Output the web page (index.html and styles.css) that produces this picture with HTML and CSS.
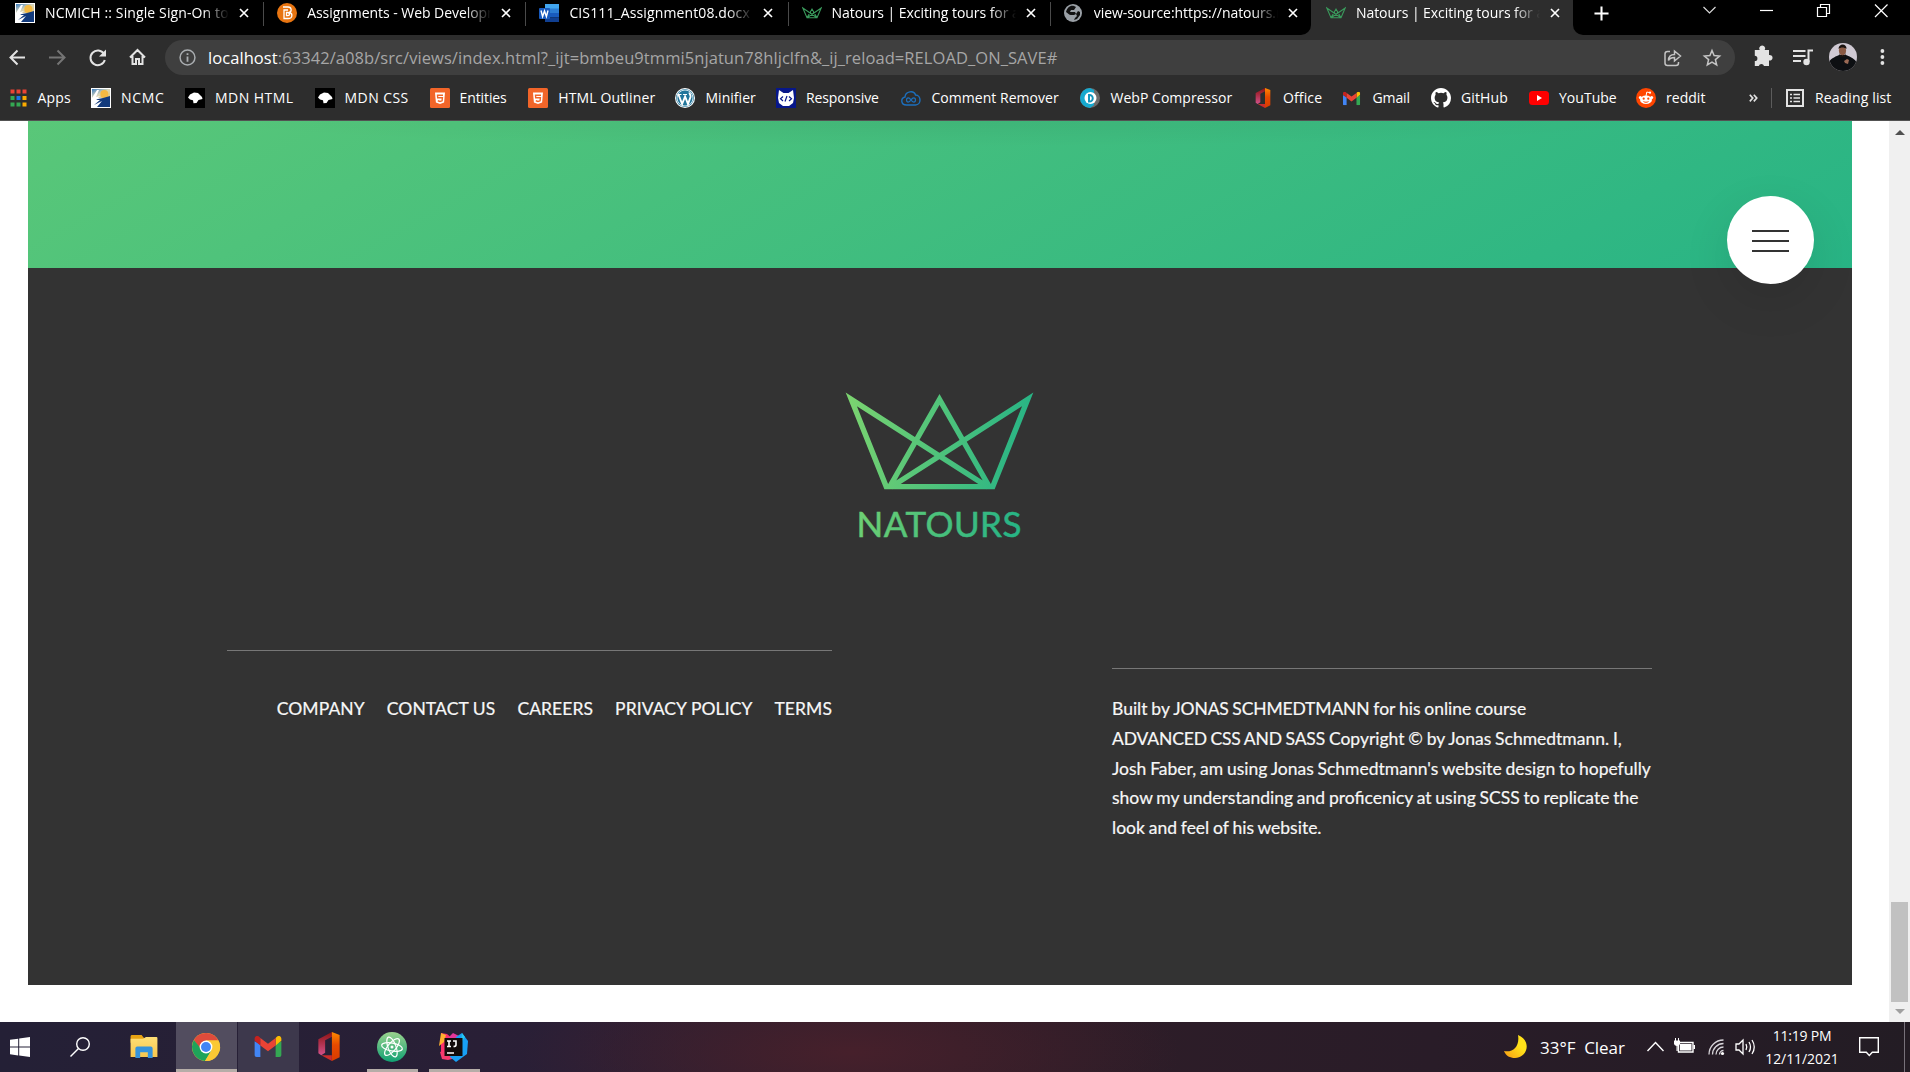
FILE: index.html
```html
<!DOCTYPE html>
<html lang="en">
<head>
<meta charset="utf-8">
<title>Natours | Exciting tours for adventurous people</title>
<link rel="stylesheet" href="styles.css">
</head>
<body>
<svg class="defs" aria-hidden="true">
  <defs>
    <linearGradient id="leaf" gradientUnits="userSpaceOnUse" x1="26" y1="0" x2="213" y2="30"><stop offset="0" stop-color="#7ed56f"/><stop offset="1" stop-color="#28b485"/></linearGradient>
    <linearGradient id="orange" x1="0" y1="0" x2="0" y2="1"><stop offset="0" stop-color="#ff8a00"/><stop offset=".45" stop-color="#e64a00"/><stop offset="1" stop-color="#d83b01"/></linearGradient>
    <linearGradient id="wine" x1="0" y1="0" x2="0" y2="1"><stop offset="0" stop-color="#8f1212"/><stop offset="1" stop-color="#d2518a"/></linearGradient>
    <linearGradient id="atom" x1="0" y1="0" x2="0" y2="1"><stop offset="0" stop-color="#9bd38e"/><stop offset="1" stop-color="#10a173"/></linearGradient>
    <linearGradient id="folder" x1="0" y1="0" x2="0" y2="1"><stop offset="0" stop-color="#ffdf75"/><stop offset="1" stop-color="#f7c64d"/></linearGradient>
    <linearGradient id="moon" x1="1" y1="0" x2="0" y2="1"><stop offset=".4" stop-color="#ffe11a"/><stop offset="1" stop-color="#f79a14"/></linearGradient>
    <linearGradient id="dusk" x1="0" y1="0" x2="1" y2="1"><stop offset="0" stop-color="#3a7cc0"/><stop offset=".5" stop-color="#d8d5b8"/><stop offset="1" stop-color="#e9c46a"/></linearGradient>
    <symbol id="ncmc" viewBox="0 0 20 20"><path fill="#fff" d="M0 0h20v20H0z"/><path fill="url(#dusk)" d="M1 1h18v9H1z"/><circle cx="13.3" cy="6" r="4" fill="#f4b942"/><path fill="#123a7c" d="M1 19V13l6-2 5-1 7-2v11z"/><path fill="#fff" d="m1 10 5-8 2 0-3 7 4-1-4 4 4 0-6 5 8-4-5 6H1z"/></symbol>
    <symbol id="crown" viewBox="0 0 20 20"><path fill="none" stroke="#3a9a5c" stroke-width="1.1" d="M.8 5 5 14.8h10L19.200 5 5 14.800 10 6l5 8.800Z"/></symbol>
    <symbol id="mdn" viewBox="0 0 20 20"><path d="M0 0h20v20H0z"/><path fill="#fff" d="M3 9.500 5 6.500l4-2 4 .5 4 4 .5 2-4 1-2 3-3 .3-.5-3-3-.8z"/></symbol>
    <symbol id="html5" viewBox="0 0 20 20"><rect width="20" height="20" rx="1.500" fill="#f26529"/><path fill="#fff" d="m5 4.500 10 0-.9 10L10 16l-4.100-1.500z"/><path fill="none" stroke="#f26529" stroke-width="1.400" d="M13 7.200H7.500l.2 2.600h4.700l-.3 3-2.100.6-2.200-.6"/></symbol>
    <symbol id="office" viewBox="0 0 24 30"><path fill="url(#wine)" d="M1 7.500 15 0v5L8 8.500v13L4 24l-3-2z"/><path fill="url(#orange)" d="m15 0 8 3v23l-8 4z"/><path fill="#ca2c2c" d="M4 24h11v6z"/></symbol>
    <symbol id="gmail" viewBox="0 0 28 22"><path fill="#4285f4" d="M0 5.500 6 9v13H2a2 2 0 0 1-2-2z"/><path fill="#34a853" d="m28 5.500-6 3.500v13h4a2 2 0 0 0 2-2z"/><path fill="#c5221f" d="M0 5V3c0-3 3-4 5-2l1 1v8z"/><path fill="#fbbc04" d="M28 5V3c0-3-3-4-5-2l-1 1v8z"/><path fill="#ea4335" d="M6 2v8l8 6 8-6V2l-8 6z"/></symbol>
    <symbol id="close" viewBox="0 0 12 12"><path stroke="#fff" stroke-width="2" d="m1.200 1.200 9.600 9.600M10.800 1.200 1.200 10.800"/></symbol>
  </defs>
</svg>

<header class="browser">
  <div class="tabs">
    <div class="tab"><svg class="fav"><use href="#ncmc"/></svg><span class="tab-title roomy">NCMICH :: Single Sign-On to all</span><svg class="x"><use href="#close"/></svg></div>
    <div class="tab"><svg class="fav" viewBox="0 0 20 20"><circle cx="10" cy="10" r="10" fill="#e87511"/><path fill="none" stroke="#fff" stroke-width="1.300" d="M6 4h5c4 0 4 5 1 5.500 4 .5 4 6-1 6H7V7h4M9.500 9.500H11c2 .5 2 3 0 3.200H9.500z"/></svg><span class="tab-title">Assignments - Web Development</span><svg class="x"><use href="#close"/></svg></div>
    <div class="tab"><svg class="fav" viewBox="0 0 20 20"><path fill="#41a5ee" d="M6 1h14v5H6z"/><path fill="#2b7cd3" d="M6 5.500h14V10H6z"/><path fill="#185abd" d="M6 10h14v4.500H6z"/><path fill="#103f91" d="M6 14.500h14V19H6z"/><rect y="5" width="11" height="11" rx="1" fill="#185abd"/><path fill="none" stroke="#fff" stroke-width="1.400" d="m2 7.500 1.600 6 1.900-5.500L7.400 13.500 9 7.500"/></svg><span class="tab-title roomy">CIS111_Assignment08.docx</span><svg class="x"><use href="#close"/></svg></div>
    <div class="tab"><svg class="fav"><use href="#crown"/></svg><span class="tab-title">Natours | Exciting tours for adv</span><svg class="x"><use href="#close"/></svg></div>
    <div class="tab"><svg class="fav globe" viewBox="0 0 20 20"><circle cx="9" cy="10" r="9" fill="#9aa0a6"/><path fill="#111" d="M2 9c1-4 4-7 8-6l2 1-2 3H7L6 9h5l1 2-2 1H7c-2 0-3-2-5-3zm12-1 2 1v3l-3 4-3 1 1-2 2-2-1-2z"/></svg><span class="tab-title">view-source:https://natours.n</span><svg class="x"><use href="#close"/></svg></div>
    <div class="tab active"><svg class="fav"><use href="#crown"/></svg><span class="tab-title">Natours | Exciting tours for adv</span><svg class="x"><use href="#close"/></svg></div>
    <div class="tab-rest">
      <svg class="plus" viewBox="0 0 16 16"><path stroke="#fff" stroke-width="2.200" d="M8 .5v15M.5 8h15"/></svg>
      <svg class="win" viewBox="0 0 190 20"><g fill="none" stroke="#fff" stroke-width="1.200"><path d="m3.500 7 6 6 6-6" opacity=".85"/><path d="M60 10.500h13"/><path d="M117.500 7.500h9v9h-9zM120.500 7.500v-3h9v9h-3"/><path d="m175 4.500 12.500 12.500m0-12.500L175 17"/></g></svg>
    </div>
  </div>

  <div class="toolbar">
    <svg class="nav" viewBox="0 0 165 42"><g fill="none" stroke="#e3e3e3" stroke-width="2"><path d="M25 22.500H11M17.500 15.500l-7 7 7 7"/><path stroke="#757575" d="M49 22.500h14.500M57.500 15.500l7 7-7 7"/><path d="M104 19a7.300 7.300 0 1 0 .8 6"/><path d="M130 22.500 137.500 15l7.500 7.500M132.500 21v8h3.500v-5h3v5h3.500v-8"/></g><path fill="#e3e3e3" d="M106 14.500v7h-7z"/></svg>
    <div class="omnibox">
      <svg class="info" viewBox="0 0 16 16"><circle cx="8" cy="8" r="7" fill="none" stroke="#a9adb0" stroke-width="1.400"/><path stroke="#a9adb0" stroke-width="1.700" d="M8 7v5M8 4v1.600"/></svg>
      <span class="url"><b>localhost</b>:63342/a08b/src/views/index.html?_ijt=bmbeu9tmmi5njatun78hljclfn&amp;_ij_reload=RELOAD_ON_SAVE#</span>
      <svg class="page-acts" viewBox="0 0 60 20"><g fill="none" stroke="#c4c4c4" stroke-width="1.500"><path d="M8 3.500H5.500a2.500 2.500 0 0 0-2.500 2.500v9a2.500 2.500 0 0 0 2.500 2.500h8.500a2.500 2.500 0 0 0 2.500-2.500v-1"/><path d="M6.500 12.500c0-4 2.500-6 6-6V3l6 5-6 5v-3.500c-3 0-5 1-6 3z"/><path d="m50 2.500 2.100 5.100 5.500.4-4.200 3.600 1.300 5.400-4.700-2.900-4.700 2.900 1.300-5.400L42.400 8l5.500-.4z"/></g></svg>
    </div>
    <svg class="exts" viewBox="0 0 175 42"><path transform="translate(-14 -1)" fill="#e3e3e3" d="M34.500 16h4.200a3 2.800 0 1 1 5 0h4.300v5a3 2.800 0 1 1 0 5.500V32h-5a2.700 2.700 0 0 0-5.200 0h-4v-5a2.600 2.600 0 0 0 0-5.200V16z"/><path stroke="#e3e3e3" stroke-width="2" fill="none" d="M58 16h12.500M58 21h12.500M58 26h8M73.500 27V15.500h4.500"/><circle cx="71.500" cy="27" r="3.200" fill="#e3e3e3"/>
      <clipPath id="face"><circle cx="108" cy="22" r="14"/></clipPath><g clip-path="url(#face)"><path fill="#cfc9d3" d="M90 5h40v40H90z"/><path fill="#0d0f12" d="M94 36v-9c2-4 8-6 10-7h7c5 2 9 4 11 8v12H94z"/><ellipse cx="107.500" cy="15.500" rx="3.600" ry="5" fill="#8a5a44"/><path fill="#19120f" d="M103.500 14c0-6 8.500-6 8 0-2-2-6-2-8 0zm.5 3c1 5 6 5 7 0l-1 5h-5z"/><path fill="#9b6a55" d="m109 26 3-2 2 1-1 4-3-1z"/></g>
      <g fill="#e3e3e3"><circle cx="147.400" cy="16" r="1.900"/><circle cx="147.400" cy="22" r="1.900"/><circle cx="147.400" cy="28" r="1.900"/></g></svg>
  </div>

  <nav class="bookmarks">
    <a><svg viewBox="0 0 20 20"><path fill="#ea4335" d="M2.500 1.500h4v4h-4zM8.500 1.500h4v4h-4zM14.500 1.500h4v4h-4z"/><path fill="#34a853" d="M2.500 8h4v4h-4zM2.500 14.500h4v4h-4zM8.500 14.500h4v4h-4z"/><path fill="#1a73e8" d="M8.500 8h4v4h-4z"/><path fill="#fbab00" d="M14.500 8h4v4h-4zM14.500 14.500h4v4h-4z"/></svg><span class="ls2">Apps</span></a>
    <a><svg><use href="#ncmc"/></svg><span class="ls5">NCMC</span></a>
    <a><svg><use href="#mdn"/></svg><span class="ls4">MDN HTML</span></a>
    <a><svg><use href="#mdn"/></svg><span class="ls4">MDN CSS</span></a>
    <a><svg><use href="#html5"/></svg><span class="tight">Entities</span></a>
    <a><svg><use href="#html5"/></svg><span class="ls1">HTML Outliner</span></a>
    <a><svg viewBox="0 0 20 20"><circle cx="10" cy="10" r="10" fill="#fff"/><circle cx="10" cy="10" r="9" fill="#21759b"/><circle cx="10" cy="10" r="8" fill="none" stroke="#fff" stroke-width=".8"/><path fill="none" stroke="#fff" stroke-width="1.900" d="m3.500 6.500 3.600 9.500 3-7.500 2.900 7.500 2.500-7c.5-2-1-2.500-1-4.500"/><path stroke="#fff" d="M2.500 6.500h4M8 6.500h4"/></svg><span>Minifier</span></a>
    <a><svg viewBox="0 0 20 20"><path fill="#07178a" d="M0 0h20v20H0z"/><path fill="#fff" d="m3 2 4.500 3h5L17 2l1 8-1 5-4 3H7l-4-3-1-5z"/><path fill="none" stroke="#07178a" stroke-width="1.200" d="m7 8.500-2.500 2.300L7 13m6-4.500 2.500 2.300L13 13m-2-5-2 5.500"/></svg><span class="tight">Responsive</span></a>
    <a><svg viewBox="0 0 20 20"><path fill="none" stroke="#1c6fbd" stroke-width="1.400" d="M5.500 17C-.5 17-.5 10 4 9c.5-6 9-7 10.500-2 6 0 6 10 0 10z"/><path fill="none" stroke="#1c6fbd" stroke-width="1.300" d="M10 12c-2-3-4.500-2.500-4.500 0s2.500 3 4.500 0 4.500-2.500 4.500 0-2.500 3-4.500 0z"/></svg><span>Comment Remover</span></a>
    <a><svg viewBox="0 0 20 20"><circle cx="10" cy="10" r="10" fill="#6b6b6b"/><path fill="#16a9cf" d="M10 0a10 10 0 0 0 0 20l4-3V2z"/><circle cx="10.500" cy="10" r="6" fill="#fff"/><path fill="none" stroke="#1496bd" stroke-width="2" d="M9 7v6.500c5 .5 5-7 0-6.500z"/></svg><span>WebP Compressor</span></a>
    <a><svg><use href="#office"/></svg><span class="ls1">Office</span></a>
    <a><svg viewBox="-1 0 22 20"><use href="#gmail" y="3" width="19" height="15"/></svg><span class="tight">Gmail</span></a>
    <a><svg viewBox="0 0 16 16"><path fill="#fff" d="M8 0C3.580 0 0 3.580 0 8c0 3.540 2.290 6.530 5.470 7.590.4.070.55-.17.55-.38 0-.19-.01-.82-.01-1.490-2.010.37-2.530-.49-2.690-.94-.09-.23-.48-.94-.82-1.130-.28-.15-.68-.52-.01-.53.63-.01 1.080.58 1.230.82.72 1.210 1.870.87 2.330.66.070-.52.28-.87.51-1.070-1.780-.2-3.640-.89-3.640-3.950 0-.87.31-1.590.82-2.150-.08-.2-.36-1.020.08-2.120 0 0 .67-.21 2.200.82a7.400 7.400 0 0 1 4 0c1.530-1.040 2.200-.82 2.200-.82.44 1.100.16 1.920.08 2.120.51.56.82 1.270.82 2.150 0 3.070-1.870 3.750-3.650 3.950.29.25.54.73.54 1.480 0 1.070-.01 1.930-.01 2.200 0 .21.15.46.55.38A8 8 0 0 0 16 8c0-4.420-3.580-8-8-8z"/></svg><span class="ls1">GitHub</span></a>
    <a><svg viewBox="0 0 20 20"><rect y="3" width="20" height="14" rx="3.500" fill="red"/><path fill="#fff" d="m8 7 5 3-5 3z"/></svg><span>YouTube</span></a>
    <a><svg viewBox="0 0 20 20"><circle cx="10" cy="10" r="10" fill="#ff4500"/><ellipse cx="10" cy="11.700" rx="6" ry="4.300" fill="#fff"/><circle cx="4.300" cy="9.500" r="1.500" fill="#fff"/><circle cx="15.700" cy="9.500" r="1.500" fill="#fff"/><path fill="none" stroke="#fff" d="m10 8 .8-4 3 .7"/><circle cx="14" cy="4.700" r="1.100" fill="#fff"/><circle cx="7.700" cy="10.700" r="1.100" fill="#ff4500"/><circle cx="12.300" cy="10.700" r="1.100" fill="#ff4500"/><path fill="none" stroke="#ff4500" d="M7.500 13.500c1.500 1 3.500 1 5 0"/></svg><span>reddit</span></a>
    <svg class="more" viewBox="0 0 9 9"><path fill="none" stroke="#e3e3e3" stroke-width="1.600" d="m.8.8 3 3.300-3 3.300m4-6.600 3 3.300-3 3.300"/></svg>
    <a class="reading"><svg viewBox="0 0 20 20"><path fill="none" stroke="#e3e3e3" stroke-width="2" d="M2 2h16v16H2z"/><path stroke="#e3e3e3" stroke-width="1.700" d="M5 6.500h2M5 10h2M5 13.500h2M8.500 6.500H15M8.500 10H15M8.500 13.500H15"/></svg><span class="ls1">Reading list</span></a>
  </nav>
</header>

<main class="viewport">
  <div class="page">
    <section class="booking"></section>
    <footer class="footer">
      <svg class="logo" viewBox="0 0 240 190"><g fill="none" stroke="url(#leaf)" stroke-width="5.400" stroke-miterlimit="10"><path d="M119.500 86 31.300 29.400 66.200 116.600h106.600L207.700 29.400 119.500 86"/><path d="m119.500 86 48.500 31M119.500 86 71 117M69.500 117l50-87.500 50 87.500"/></g><text class="brand" x="36.500" y="167" textLength="165" fill="url(#leaf)" stroke="url(#leaf)" stroke-width=".5">NATOURS</text></svg>
      <div class="columns">
        <ul class="links"><li>Company</li><li>Contact us</li><li>Careers</li><li>Privacy policy</li><li>Terms</li></ul>
        <p class="copy">Built by <span class="up">Jonas Schmedtmann</span> for his online course <span class="up course">Advanced CSS and Sass</span> Copyright &copy; by Jonas Schmedtmann. I, Josh Faber, am using Jonas Schmedtmann's website design to hopefully show my understanding and proficenicy at using SCSS to replicate the look and feel of his website.</p>
      </div>
    </footer>
  </div>
  <div class="scrollbar"><i class="up-arrow"></i><i class="thumb"></i><i class="down-arrow"></i></div>
  <button class="menu" aria-label="Menu"><i></i><i></i><i></i></button>
</main>

<div class="taskbar">
  <div class="task start"><svg viewBox="0 0 20 20"><path fill="#fff" d="m0 2.800 8.200-1.100v7.900H0zM9.200 1.500 20 0v9.600H9.200zM0 10.500h8.200v7.900L0 17.300zM9.200 10.500H20V20L9.200 18.500z"/></svg></div>
  <div class="task search"><svg viewBox="0 0 20 20"><g fill="none" stroke="#fff" stroke-width="1.400"><circle cx="13" cy="7" r="6.300"/><path d="M8.500 11.500.5 19.500"/></g></svg></div>
  <div class="task files"><svg viewBox="0 0 28 24"><path fill="#e8a313" d="M0 1.500Q0 0 1.500 0h10L14 3v5H0z"/><path fill="url(#folder)" d="M0 4h13l3-2h11q1 0 1 1v20H0z"/><path fill="#3593dc" d="M5 24V14q0-2 2-2h14q2 0 2 2v10h-5v-6h-8v6z"/></svg></div>
  <div class="task chrome run"><svg viewBox="0 0 28 28"><circle cx="14" cy="14" r="14" fill="#fbc934"/><path fill="#de4b3c" d="M14 14V7.500h12.400A14 14 0 0 0 1.900 7l6.500 10z"/><path fill="#1ea45a" d="M1.900 7A14 14 0 0 0 13 28l6-10-9-1z"/><path fill="#fbc934" d="M13 28A14 14 0 0 0 26.400 7.500H14l5.600 10z"/><circle cx="14" cy="14" r="6.400" fill="#fff"/><circle cx="14" cy="14" r="5" fill="#4285f4"/></svg></div>
  <div class="task mail"><svg><use href="#gmail"/></svg></div>
  <div class="task off"><svg><use href="#office"/></svg></div>
  <div class="task atom run"><svg viewBox="0 0 30 30"><circle cx="15" cy="15" r="15" fill="url(#atom)"/><g fill="none" stroke="#fff" stroke-width="1.200"><ellipse cx="15" cy="15" rx="4" ry="10.500" transform="rotate(-20 15 15)"/><ellipse cx="15" cy="15" rx="4" ry="10.500" transform="rotate(40 15 15)"/><ellipse cx="15" cy="15" rx="4" ry="10.500" transform="rotate(100 15 15)"/></g><circle cx="15" cy="15" r="1.500" fill="#fff"/></svg></div>
  <div class="task idea run"><svg viewBox="0 0 30 30"><path fill="#fc2f6d" d="m2 1 6 1 7 6-6 14-7-2z"/><path fill="#ffb02e" d="M2 1 7 3 5 10 0 14z"/><path fill="#e5379a" d="m14 1 6 3-5 8-6-6z"/><path fill="#f53b6f" d="m1 20 8-2 8 8-8 2-6-1z"/><path fill="#18a0f5" d="m17 5 6-4 6 8-1 13-11 8-6-5z"/><path fill="#23c7f0" d="m23 1 3 4-4 6z"/><path fill="#120c0c" d="M5.500 6h18v18h-18z"/><path fill="none" stroke="#fff" stroke-width="1.600" d="M8 9h4M10 9v5.500M8 14.500h4M14 9h3v4q0 1.500-2.500 1.500M8 21h7"/></svg></div>
  <div class="tray">
    <svg class="moon" viewBox="0 0 23 23"><path fill="url(#moon)" d="M14 0C27 5 25 22 11 23 6 23 2 21 0 16c9 2 16-5 14-16z"/></svg>
    <span class="weather">33°F&nbsp; Clear</span>
    <svg class="status" viewBox="0 0 116 24"><g fill="none" stroke="#fff" stroke-width="1.400"><path d="m4.500 17 8-8.500 8 8.500"/><path d="M35.500 8.500H50v9.500H35.500z"/></g><path fill="#fff" d="M37 10h11.500v6.500H37zM50.500 11h1.500v4h-1.500zM31 6.500h6v3.500q-1 2-2.300 2v5h-1.200v-5q-2-.3-2.500-2zM32 4h1v3h-1zM35 4h1v3h-1z"/><g fill="none" stroke="#d8d5da" stroke-width="1.300"><path d="M66 20.500A14.500 14.500 0 0 1 80.500 6M69.500 20.500a11 11 0 0 1 11-11M73 20.500a7.500 7.500 0 0 1 7.500-7.500M76.500 20.500a4 4 0 0 1 4-4"/></g><circle cx="79.500" cy="19.500" r="1.600" fill="#fff"/><g fill="none" stroke="#fff" stroke-width="1.300"><path d="M93 10h3l4-4v14l-4-4h-3zM103 10q1.500 3 0 6M106 8q3 5 0 10M109 6q4.500 7 0 14"/></g></svg>
    <div class="clock"><span class="time">11:19 PM</span><span>12/11/2021</span></div>
    <svg class="note" viewBox="0 0 20 20"><path fill="none" stroke="#fff" stroke-width="1.400" d="M.7.7h18.600v14.600h-6L10.300 18.500 7.300 15.300H.7z"/></svg>
  </div>
</div>
</body>
</html>
```
FILE: styles.css
```css
* { box-sizing: border-box; margin: 0; padding: 0; }
body { width: 1910px; height: 1072px; overflow: hidden; background: #fff; display: flex; flex-direction: column; font-family: "Open Sans", "Noto Sans", sans-serif; }
svg { display: block; flex: none; overflow: visible; }
.defs { position: absolute; width: 0; height: 0; }

/* Browser chrome */
.browser { height: 121px; flex: none; background: #2d2d2d; border-bottom: 1px solid #525252; color: #fff; }
.tabs { height: 35px; display: flex; background: #2d2d2d; }
.tab { width: 262.200px; height: 35px; flex: none; background: #000; display: flex; align-items: flex-start; padding: 3px 0 0 15px; }
.tab:not(.active) { background: linear-gradient(#4a4a4a, #4a4a4a) 1px 2px / 1px 24px no-repeat #000; }
.tab:first-child { background: #000; }
.tab:nth-child(5) { border-bottom-right-radius: 10px; }
.tab.active { background: #2d2d2d; }
.fav { width: 20px; height: 20px; margin-right: 10px; }
.tab-title { width: 185px; height: 24px; overflow: hidden; white-space: nowrap; font-size: 14px; line-height: 20px; letter-spacing: -.05px; -webkit-mask: linear-gradient(90deg, #000 158px, transparent 184px); mask: linear-gradient(90deg, #000 158px, transparent 184px); }
.tab-title.roomy { letter-spacing: .12px; }
.x { width: 10px; height: 10px; margin: 5px 0 0 9px; }
.tab-rest { flex: 1; background: #000; border-bottom-left-radius: 10px; display: flex; padding: 3px 20px 0 21px; justify-content: space-between; }
.plus { width: 15px; height: 15px; margin-top: 3px; }
.win { width: 190px; height: 20px; margin-top: -3px; }

.toolbar { height: 41px; display: flex; }
.nav { width: 165px; height: 42px; }
.omnibox { width: 1570px; height: 35px; margin-top: 5px; border-radius: 18px; background: #3f3f3f; display: flex; align-items: center; padding: 0 13px 0 14px; }
.info { width: 17px; height: 17px; }
.url { margin-left: 12px; font-size: 16.500px; letter-spacing: .07px; line-height: 35px; color: #a6a6a6; white-space: nowrap; }
.url b { font-weight: 400; color: #fff; }
.page-acts { width: 60px; height: 20px; margin-left: auto; }
.exts { width: 175px; height: 42px; }

.bookmarks { height: 44px; padding-left: 7.500px; display: grid; grid-template-columns: 83.500px 94px 129.500px 115px 98.800px 147.200px 100.500px 125.500px 179px 172.500px 89.500px 88.500px 98px 107px 113px 22px 1fr; align-items: center; }
.bookmarks a { display: flex; align-items: center; gap: 10px; font-size: 14px; line-height: 20px; letter-spacing: .03px; white-space: nowrap; }
.bookmarks a svg { width: 20px; height: 20px; }
.bookmarks .tight { letter-spacing: -.1px; }
.bookmarks .ls1 { letter-spacing: .13px; }
.bookmarks .ls2 { letter-spacing: .2px; }
.bookmarks .ls4 { letter-spacing: .45px; }
.bookmarks .ls5 { letter-spacing: .65px; }
.bookmarks .more { width: 9px; height: 9px; }
.reading { border-left: 1px solid #5c5c5c; padding-left: 13px; }

/* Page */
.viewport { height: 901px; flex: none; display: flex; justify-content: space-between; position: relative; }
.page { width: 1852px; padding-left: 28px; }
.booking { height: 147px; background: radial-gradient(ellipse 740px 26px at 50% 0, rgba(0,0,0,.05), transparent) no-repeat, linear-gradient(to right bottom, #7ed56f, #28b485) left bottom / 1824px 1000px no-repeat; }
.footer { height: 717px; background: #333; padding-top: 102px; color: #f7f7f7; font: 17.500px/29.750px Lato, sans-serif; -webkit-text-stroke: .2px #f7f7f7; }
.logo { width: 240px; height: 190px; margin-left: 792px; }
.brand { font: 35px Lato, sans-serif; -webkit-text-stroke: 0; }
.columns { display: grid; grid-template-columns: 605px 540px; column-gap: 280px; padding: 90px 0 0 199px; align-items: start; }
.links { list-style: none; border-top: 1px solid #777; padding-top: 43px; display: flex; justify-content: flex-end; gap: 22px; text-transform: uppercase; white-space: nowrap; letter-spacing: .08px; }
.copy { margin-top: 18px; border-top: 1px solid #777; padding-top: 25px; word-spacing: -.65px; }
.up { text-transform: uppercase; letter-spacing: -.15px; }
.course { white-space: nowrap; }
.scrollbar { width: 21px; background: #f0f0f0; display: flex; flex-direction: column; align-items: center; }
.up-arrow { margin-top: 9px; border: 5px solid transparent; border-top: 0; border-bottom-color: #505050; }
.down-arrow { margin-top: 7px; border: 5px solid transparent; border-bottom: 0; border-top-color: #a0a0a0; }
.thumb { width: 17px; height: 100px; margin-top: 767px; background: #c1c1c1; }
.menu { position: absolute; left: 1727px; top: 75px; width: 87px; height: 88px; border: 0; border-radius: 50%; background: #fff; box-shadow: 0 16px 48px rgba(0,0,0,.1); display: flex; flex-direction: column; align-items: center; justify-content: center; gap: 8px; padding-top: 2px; }
.menu i { width: 37px; height: 2px; background: #333; }

/* Taskbar */
.taskbar { height: 50px; flex: none; display: flex; color: #fff; background: radial-gradient(ellipse 330px 90px at 850px 60%, #46202b, transparent), linear-gradient(90deg, #242036, #2a1f36 30%, #2f1d28 50%, #291c28 75%, #231c24); }
.task { height: 50px; flex: none; }
.start { width: 60px; padding: 15px 0 0 10px; }
.search { width: 60px; padding: 15px 0 0 10px; }
.start svg, .search svg { width: 20px; height: 20px; }
.files { width: 56px; padding: 13px 0 0 10px; }
.files svg { width: 28px; height: 23px; }
.chrome { width: 61px; margin-right: 1px; padding: 11px 0 0 16px; background: #524d5f; }
.chrome svg { width: 28px; height: 28px; }
.mail { width: 61px; padding: 14px 0 0 16px; background: #3d384c; }
.mail svg { width: 28px; height: 21px; }
.off { width: 68px; padding: 10px 0 0 18px; }
.off svg { width: 24px; height: 29px; }
.atom { width: 51px; padding: 10px 0 0 10px; }
.atom svg, .idea svg { width: 30px; height: 30px; }
.idea { width: 51px; margin-left: 11px; padding: 10px 0 0 10px; }
.run { border-bottom: 3px solid #b5ada8; }
.tray { flex: 1; display: flex; padding-left: 1024px; border-right: 1px solid #77717a; margin-right: 5px; }
.moon { width: 23px; height: 23px; margin-top: 13px; }
.weather { margin: 14px 0 0 13px; width: 103px; font-size: 17px; line-height: 24px; letter-spacing: -.03px; white-space: nowrap; }
.status { width: 116px; height: 24px; margin-top: 12px; }
.clock { width: 86px; display: flex; flex-direction: column; align-items: center; font-size: 14px; line-height: 23px; letter-spacing: -.08px; padding-top: 2px; }
.time { letter-spacing: -.2px; }
.note { width: 20px; height: 20px; margin: 15px 0 0 14px; }
```
